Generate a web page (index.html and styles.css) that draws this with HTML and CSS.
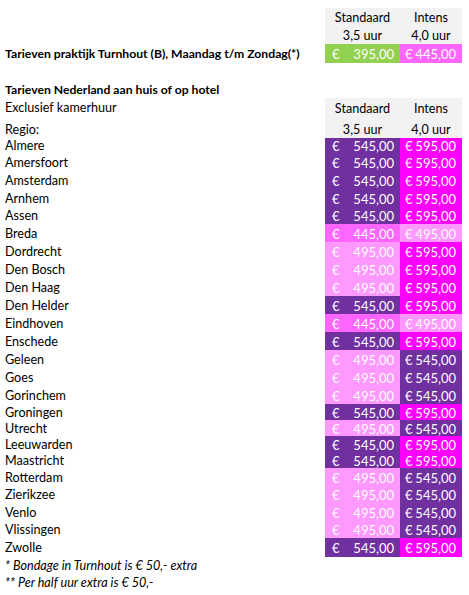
FILE: index.html
```html
<!DOCTYPE html>
<html lang="nl">
<head>
<meta charset="utf-8">
<title>Tarieven</title>
<link rel="stylesheet" href="styles.css">
</head>
<body>
<div class="sheet">
  <div class="row h18"><div class="lbl"></div><div class="c hd">Standaard</div><div class="c hd">Intens</div></div>
  <div class="row h18"><div class="lbl"></div><div class="c hd">3,5 uur</div><div class="c hd">4,0 uur</div></div>
  <div class="row h19"><div class="lbl b">Tarieven praktijk Turnhout (B), Maandag t/m Zondag(*)</div><div class="c p green"><span>€</span><span>395,00</span></div><div class="c p mid"><span>€</span><span>445,00</span></div></div>
  <div class="row h17"></div>
  <div class="row h18"><div class="lbl b">Tarieven Nederland aan huis of op hotel</div></div>
  <div class="row h19"><div class="lbl">Exclusief kamerhuur</div><div class="c hd">Standaard</div><div class="c hd">Intens</div></div>
  <div class="row h21 low"><div class="lbl">Regio:</div><div class="c hd">3,5 uur</div><div class="c hd">4,0 uur</div></div>

  <div class="row h15"><div class="lbl">Almere</div><div class="c p dk"><span>€</span><span>545,00</span></div><div class="c p mg"><span>€</span><span>595,00</span></div></div>
  <div class="row h18"><div class="lbl">Amersfoort</div><div class="c p dk"><span>€</span><span>545,00</span></div><div class="c p mg"><span>€</span><span>595,00</span></div></div>
  <div class="row h18"><div class="lbl">Amsterdam</div><div class="c p dk"><span>€</span><span>545,00</span></div><div class="c p mg"><span>€</span><span>595,00</span></div></div>
  <div class="row h18"><div class="lbl">Arnhem</div><div class="c p dk"><span>€</span><span>545,00</span></div><div class="c p mg"><span>€</span><span>595,00</span></div></div>
  <div class="row h17"><div class="lbl">Assen</div><div class="c p dk"><span>€</span><span>545,00</span></div><div class="c p mg"><span>€</span><span>595,00</span></div></div>
  <div class="row h18"><div class="lbl">Breda</div><div class="c p mid"><span>€</span><span>445,00</span></div><div class="c p lt"><span>€</span><span>495,00</span></div></div>
  <div class="row h18"><div class="lbl">Dordrecht</div><div class="c p lt"><span>€</span><span>495,00</span></div><div class="c p mg"><span>€</span><span>595,00</span></div></div>
  <div class="row h18"><div class="lbl">Den Bosch</div><div class="c p lt"><span>€</span><span>495,00</span></div><div class="c p mg"><span>€</span><span>595,00</span></div></div>
  <div class="row h18"><div class="lbl">Den Haag</div><div class="c p lt"><span>€</span><span>495,00</span></div><div class="c p mg"><span>€</span><span>595,00</span></div></div>
  <div class="row h18"><div class="lbl">Den Helder</div><div class="c p dk"><span>€</span><span>545,00</span></div><div class="c p mg"><span>€</span><span>595,00</span></div></div>
  <div class="row h18"><div class="lbl">Eindhoven</div><div class="c p mid"><span>€</span><span>445,00</span></div><div class="c p lt"><span>€</span><span>495,00</span></div></div>
  <div class="row h18"><div class="lbl">Enschede</div><div class="c p dk"><span>€</span><span>545,00</span></div><div class="c p mg"><span>€</span><span>595,00</span></div></div>
  <div class="row h18"><div class="lbl">Geleen</div><div class="c p lt"><span>€</span><span>495,00</span></div><div class="c p dk"><span>€</span><span>545,00</span></div></div>
  <div class="row h18"><div class="lbl">Goes</div><div class="c p lt"><span>€</span><span>495,00</span></div><div class="c p dk"><span>€</span><span>545,00</span></div></div>
  <div class="row h18"><div class="lbl">Gorinchem</div><div class="c p lt"><span>€</span><span>495,00</span></div><div class="c p dk"><span>€</span><span>545,00</span></div></div>
  <div class="row h16"><div class="lbl">Groningen</div><div class="c p dk"><span>€</span><span>545,00</span></div><div class="c p mg"><span>€</span><span>595,00</span></div></div>
  <div class="row h16"><div class="lbl">Utrecht</div><div class="c p lt"><span>€</span><span>495,00</span></div><div class="c p dk"><span>€</span><span>545,00</span></div></div>
  <div class="row h16"><div class="lbl">Leeuwarden</div><div class="c p dk"><span>€</span><span>545,00</span></div><div class="c p mg"><span>€</span><span>595,00</span></div></div>
  <div class="row h16"><div class="lbl">Maastricht</div><div class="c p dk"><span>€</span><span>545,00</span></div><div class="c p mg"><span>€</span><span>595,00</span></div></div>
  <div class="row h18"><div class="lbl">Rotterdam</div><div class="c p lt"><span>€</span><span>495,00</span></div><div class="c p dk"><span>€</span><span>545,00</span></div></div>
  <div class="row h17"><div class="lbl">Zierikzee</div><div class="c p lt"><span>€</span><span>495,00</span></div><div class="c p dk"><span>€</span><span>545,00</span></div></div>
  <div class="row h18"><div class="lbl">Venlo</div><div class="c p lt"><span>€</span><span>495,00</span></div><div class="c p dk"><span>€</span><span>545,00</span></div></div>
  <div class="row h17"><div class="lbl">Vlissingen</div><div class="c p lt"><span>€</span><span>495,00</span></div><div class="c p dk"><span>€</span><span>545,00</span></div></div>
  <div class="row h19"><div class="lbl">Zwolle</div><div class="c p dk"><span>€</span><span>545,00</span></div><div class="c p mg"><span>€</span><span>595,00</span></div></div>
  <div class="row h17"><div class="lbl i">* Bondage in Turnhout is € 50,- extra</div></div>
  <div class="row h17"><div class="lbl i">** Per half uur extra is € 50,-</div></div>
</div>
</body>
</html>
```

FILE: styles.css
```css
html, body {
  margin: 0;
  padding: 0;
  background: #ffffff;
}
body {
  font-family: Lato, "Open Sans", sans-serif;
  font-size: 12.6px;
  color: #000000;
}
.sheet {
  padding: 8px 7px 0 5px;
  display: flex;
  flex-direction: column;
}
.row {
  display: flex;
  align-items: stretch;
}
.h15 { height: 15px; }
.h16 { height: 16px; }
.h17 { height: 17px; }
.h18 { height: 18px; }
.h19 { height: 19px; }
.h21 { height: 21px; }
.lbl {
  flex: 1 1 auto;
  min-width: 0;
  display: flex;
  align-items: center;
  white-space: nowrap;
}
.lbl.b {
  font-weight: bold;
  font-size: 12.2px;
}
.lbl.i { font-style: italic; }
.c {
  flex: 0 0 auto;
  display: flex;
  align-items: center;
  white-space: nowrap;
  box-sizing: border-box;
}
.c:nth-child(2) { width: 75px; }
.c:nth-child(3) { width: 62px; }
.hd {
  background: #f2f2f2;
  justify-content: center;
  padding-top: 1px;
}
.low .lbl,
.low .hd {
  align-items: flex-end;
  padding-bottom: 1px;
}
.p {
  justify-content: space-between;
  padding: 1px 6px 0 7px;
  color: #ffffff;
  font-size: 13px;
}
.c:nth-child(3).p { padding: 1px 6px 0 5px; }
.dk { background: #7030a0; }
.mg { background: #ff00ff; }
.lt { background: #ff99ff; }
.mid { background: #ff66ff; }
.green { background: #92d050; }
```
